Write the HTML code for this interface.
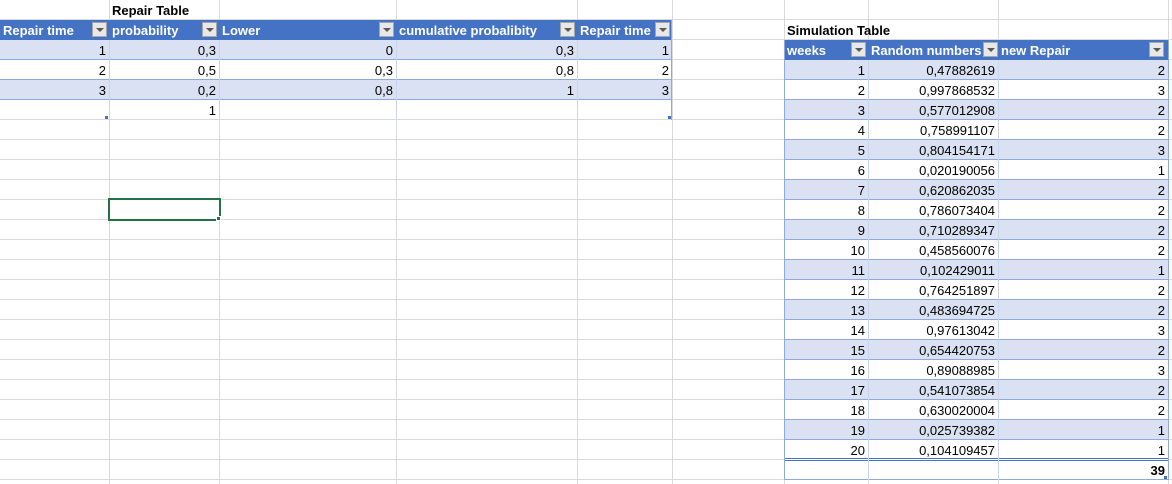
<!DOCTYPE html>
<html><head><meta charset="utf-8"><style>
*{margin:0;padding:0;box-sizing:border-box}
body{width:1172px;height:484px;background:#fff;position:relative;overflow:hidden;font-family:"Liberation Sans",Arial,sans-serif;font-size:13px;color:#000}
.h{position:absolute;left:0;width:1172px;height:1px;background:#d9d9d9}
.v{position:absolute;top:0;height:484px;width:1px;background:#d9d9d9}
.band{position:absolute;height:20px;background:#d9e1f2;border-bottom:1px solid #8ea9db}
.wr{position:absolute;height:20px;background:#fff;border-bottom:1px solid #8ea9db}
.hd{position:absolute;height:20px;background:#4472c4}
.t{position:absolute;height:20px;line-height:21px;white-space:nowrap;padding:0 3px}
.r{text-align:right}
.b{font-weight:bold}
.w{color:#fff;font-weight:bold}
.dd{position:absolute;width:15px;height:15px;background:#e8e8e8;border:1px solid #a6a6a6}
.dd:after{content:"";position:absolute;left:3px;top:5px;border-left:4px solid transparent;border-right:4px solid transparent;border-top:4px solid #595959}
.cv{position:absolute;width:1px;background:#fff}
</style></head><body>
<div class="h" style="top:19px"></div><div class="h" style="top:39px"></div><div class="h" style="top:59px"></div><div class="h" style="top:79px"></div><div class="h" style="top:99px"></div><div class="h" style="top:119px"></div><div class="h" style="top:139px"></div><div class="h" style="top:159px"></div><div class="h" style="top:179px"></div><div class="h" style="top:199px"></div><div class="h" style="top:219px"></div><div class="h" style="top:239px"></div><div class="h" style="top:259px"></div><div class="h" style="top:279px"></div><div class="h" style="top:299px"></div><div class="h" style="top:319px"></div><div class="h" style="top:339px"></div><div class="h" style="top:359px"></div><div class="h" style="top:379px"></div><div class="h" style="top:399px"></div><div class="h" style="top:419px"></div><div class="h" style="top:439px"></div><div class="h" style="top:459px"></div><div class="h" style="top:479px"></div>
<div class="v" style="left:109px"></div><div class="v" style="left:219px"></div><div class="v" style="left:396px"></div><div class="v" style="left:577px"></div><div class="v" style="left:672px"></div><div class="v" style="left:784px"></div><div class="v" style="left:868px"></div><div class="v" style="left:998px"></div><div class="v" style="left:1168px"></div>

<div class="t b" style="left:109px;top:0">Repair Table</div>
<div class="hd" style="left:0;top:20px;width:672px"></div>
<div class="band" style="left:0;top:40px;width:672px"></div>
<div class="wr" style="left:0;top:60px;width:672px"></div>
<div class="band" style="left:0;top:80px;width:672px"></div>
<div class="wr" style="left:0;top:100px;width:672px;border-bottom:none;height:19px"></div>
<div style="position:absolute;left:671px;top:20px;width:1px;height:100px;background:#8ea9db"></div>
<div class="cv" style="left:109px;top:40px;height:79px;background:#c9d5ee"></div>
<div class="cv" style="left:219px;top:40px;height:79px;background:#c9d5ee"></div>
<div class="cv" style="left:396px;top:40px;height:79px;background:#c9d5ee"></div>
<div class="cv" style="left:577px;top:40px;height:79px;background:#c9d5ee"></div>
<div class="t w" style="left:0;top:20px">Repair time</div><div class="dd" style="left:92px;top:22px"></div>
<div class="t w" style="left:109px;top:20px">probability</div><div class="dd" style="left:202px;top:22px"></div>
<div class="t w" style="left:219px;top:20px">Lower</div><div class="dd" style="left:379px;top:22px"></div>
<div class="t w" style="left:396px;top:20px">cumulative probalibity</div><div class="dd" style="left:560px;top:22px"></div>
<div class="t w" style="left:577px;top:20px">Repair time</div><div class="dd" style="left:655px;top:22px"></div>

<div class="t r" style="left:0;width:109px;top:40px">1</div><div class="t r" style="left:109px;width:110px;top:40px">0,3</div><div class="t r" style="left:219px;width:177px;top:40px">0</div><div class="t r" style="left:396px;width:181px;top:40px">0,3</div><div class="t r" style="left:577px;width:95px;top:40px">1</div>
<div class="t r" style="left:0;width:109px;top:60px">2</div><div class="t r" style="left:109px;width:110px;top:60px">0,5</div><div class="t r" style="left:219px;width:177px;top:60px">0,3</div><div class="t r" style="left:396px;width:181px;top:60px">0,8</div><div class="t r" style="left:577px;width:95px;top:60px">2</div>
<div class="t r" style="left:0;width:109px;top:80px">3</div><div class="t r" style="left:109px;width:110px;top:80px">0,2</div><div class="t r" style="left:219px;width:177px;top:80px">0,8</div><div class="t r" style="left:396px;width:181px;top:80px">1</div><div class="t r" style="left:577px;width:95px;top:80px">3</div>
<div class="t r" style="left:109px;width:110px;top:100px">1</div>
<div style="position:absolute;left:105px;top:116px;width:3px;height:3px;background:#4472c4"></div>
<div style="position:absolute;left:668px;top:116px;width:3px;height:3px;background:#4472c4"></div>

<div style="position:absolute;left:108px;top:198px;width:113px;height:23px;border:2px solid #217346"></div>
<div style="position:absolute;left:216px;top:216px;width:5px;height:5px;background:#217346;border:1px solid #fff"></div>

<div class="t b" style="left:784px;top:20px">Simulation Table</div>
<div class="hd" style="left:784px;top:40px;width:385px"></div>
<div class="band" style="left:784px;top:60px;width:385px"></div>
<div class="wr" style="left:784px;top:80px;width:385px"></div>
<div class="band" style="left:784px;top:100px;width:385px"></div>
<div class="wr" style="left:784px;top:120px;width:385px"></div>
<div class="band" style="left:784px;top:140px;width:385px"></div>
<div class="wr" style="left:784px;top:160px;width:385px"></div>
<div class="band" style="left:784px;top:180px;width:385px"></div>
<div class="wr" style="left:784px;top:200px;width:385px"></div>
<div class="band" style="left:784px;top:220px;width:385px"></div>
<div class="wr" style="left:784px;top:240px;width:385px"></div>
<div class="band" style="left:784px;top:260px;width:385px"></div>
<div class="wr" style="left:784px;top:280px;width:385px"></div>
<div class="band" style="left:784px;top:300px;width:385px"></div>
<div class="wr" style="left:784px;top:320px;width:385px"></div>
<div class="band" style="left:784px;top:340px;width:385px"></div>
<div class="wr" style="left:784px;top:360px;width:385px"></div>
<div class="band" style="left:784px;top:380px;width:385px"></div>
<div class="wr" style="left:784px;top:400px;width:385px"></div>
<div class="band" style="left:784px;top:420px;width:385px"></div>
<div class="wr" style="left:784px;top:440px;width:385px;border-bottom:none"></div>
<div style="position:absolute;left:784px;top:458px;width:385px;height:1px;background:#4472c4"></div>
<div style="position:absolute;left:784px;top:460px;width:385px;height:1px;background:#4472c4"></div>
<div class="wr" style="left:784px;top:461px;width:385px;height:19px"></div>
<div style="position:absolute;left:784px;top:40px;width:1px;height:440px;background:#8ea9db"></div>
<div style="position:absolute;left:1168px;top:40px;width:1px;height:440px;background:#8ea9db"></div>
<div class="cv" style="left:868px;top:60px;height:420px;background:#c9d5ee"></div>
<div class="cv" style="left:998px;top:60px;height:420px;background:#c9d5ee"></div>
<div class="t w" style="left:784px;top:40px">weeks</div><div class="dd" style="left:851px;top:42px"></div>
<div class="t w" style="left:868px;top:40px">Random numbers</div><div class="dd" style="left:983px;top:42px"></div>
<div class="t w" style="left:998px;top:40px">new Repair</div><div class="dd" style="left:1149px;top:42px"></div>

<div class="t r" style="left:784px;width:84px;top:60px">1</div><div class="t r" style="left:868px;width:130px;top:60px">0,47882619</div><div class="t r" style="left:998px;width:170px;top:60px">2</div>
<div class="t r" style="left:784px;width:84px;top:80px">2</div><div class="t r" style="left:868px;width:130px;top:80px">0,997868532</div><div class="t r" style="left:998px;width:170px;top:80px">3</div>
<div class="t r" style="left:784px;width:84px;top:100px">3</div><div class="t r" style="left:868px;width:130px;top:100px">0,577012908</div><div class="t r" style="left:998px;width:170px;top:100px">2</div>
<div class="t r" style="left:784px;width:84px;top:120px">4</div><div class="t r" style="left:868px;width:130px;top:120px">0,758991107</div><div class="t r" style="left:998px;width:170px;top:120px">2</div>
<div class="t r" style="left:784px;width:84px;top:140px">5</div><div class="t r" style="left:868px;width:130px;top:140px">0,804154171</div><div class="t r" style="left:998px;width:170px;top:140px">3</div>
<div class="t r" style="left:784px;width:84px;top:160px">6</div><div class="t r" style="left:868px;width:130px;top:160px">0,020190056</div><div class="t r" style="left:998px;width:170px;top:160px">1</div>
<div class="t r" style="left:784px;width:84px;top:180px">7</div><div class="t r" style="left:868px;width:130px;top:180px">0,620862035</div><div class="t r" style="left:998px;width:170px;top:180px">2</div>
<div class="t r" style="left:784px;width:84px;top:200px">8</div><div class="t r" style="left:868px;width:130px;top:200px">0,786073404</div><div class="t r" style="left:998px;width:170px;top:200px">2</div>
<div class="t r" style="left:784px;width:84px;top:220px">9</div><div class="t r" style="left:868px;width:130px;top:220px">0,710289347</div><div class="t r" style="left:998px;width:170px;top:220px">2</div>
<div class="t r" style="left:784px;width:84px;top:240px">10</div><div class="t r" style="left:868px;width:130px;top:240px">0,458560076</div><div class="t r" style="left:998px;width:170px;top:240px">2</div>
<div class="t r" style="left:784px;width:84px;top:260px">11</div><div class="t r" style="left:868px;width:130px;top:260px">0,102429011</div><div class="t r" style="left:998px;width:170px;top:260px">1</div>
<div class="t r" style="left:784px;width:84px;top:280px">12</div><div class="t r" style="left:868px;width:130px;top:280px">0,764251897</div><div class="t r" style="left:998px;width:170px;top:280px">2</div>
<div class="t r" style="left:784px;width:84px;top:300px">13</div><div class="t r" style="left:868px;width:130px;top:300px">0,483694725</div><div class="t r" style="left:998px;width:170px;top:300px">2</div>
<div class="t r" style="left:784px;width:84px;top:320px">14</div><div class="t r" style="left:868px;width:130px;top:320px">0,97613042</div><div class="t r" style="left:998px;width:170px;top:320px">3</div>
<div class="t r" style="left:784px;width:84px;top:340px">15</div><div class="t r" style="left:868px;width:130px;top:340px">0,654420753</div><div class="t r" style="left:998px;width:170px;top:340px">2</div>
<div class="t r" style="left:784px;width:84px;top:360px">16</div><div class="t r" style="left:868px;width:130px;top:360px">0,89088985</div><div class="t r" style="left:998px;width:170px;top:360px">3</div>
<div class="t r" style="left:784px;width:84px;top:380px">17</div><div class="t r" style="left:868px;width:130px;top:380px">0,541073854</div><div class="t r" style="left:998px;width:170px;top:380px">2</div>
<div class="t r" style="left:784px;width:84px;top:400px">18</div><div class="t r" style="left:868px;width:130px;top:400px">0,630020004</div><div class="t r" style="left:998px;width:170px;top:400px">2</div>
<div class="t r" style="left:784px;width:84px;top:420px">19</div><div class="t r" style="left:868px;width:130px;top:420px">0,025739382</div><div class="t r" style="left:998px;width:170px;top:420px">1</div>
<div class="t r" style="left:784px;width:84px;top:440px">20</div><div class="t r" style="left:868px;width:130px;top:440px">0,104109457</div><div class="t r" style="left:998px;width:170px;top:440px">1</div>
<div class="t r b" style="left:998px;width:170px;top:460px">39</div>
<div style="position:absolute;left:1164px;top:476px;width:3px;height:3px;background:#4472c4"></div>
</body></html>
